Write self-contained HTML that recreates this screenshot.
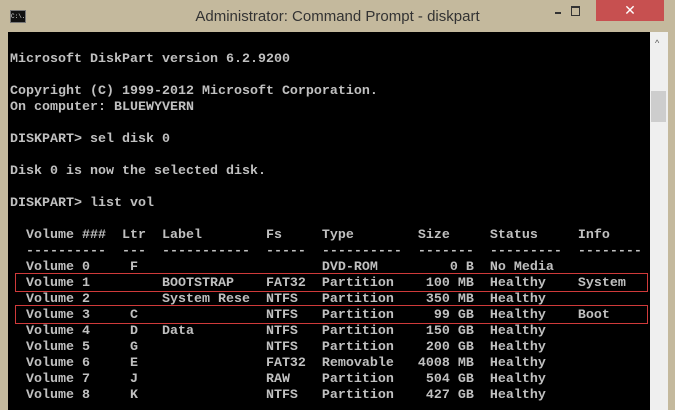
<!DOCTYPE html><html><head><style>
body{margin:0;width:675px;height:410px;overflow:hidden;background:#c4b99d;position:relative;font-family:"Liberation Sans",sans-serif}
.t{position:absolute;left:0;top:8px;width:675px;text-align:center;font-size:15px;color:#333}
.ic{position:absolute;left:10px;top:10px;width:14px;height:11px;background:#111;border:1px solid #777;color:#ddd;font-size:6px;line-height:11px;font-family:"Liberation Mono",monospace}
.cl{position:absolute;left:596px;top:0;width:68px;height:21px;background:#c75050;color:#fff;text-align:center;font-size:14px;line-height:21px}
.con{position:absolute;left:8px;top:32px;width:642px;height:378px;background:#000}
pre{margin:0;position:absolute;left:2px;top:4px;font-family:"Liberation Mono",monospace;font-weight:bold;font-size:13.33px;line-height:16px;color:#c0c0c0}
.sb{position:absolute;left:650px;top:32px;width:18px;height:378px;background:#efefef}
.th{position:absolute;left:651px;top:91px;width:15px;height:31px;background:#cdcdcd}
.box{position:absolute;left:15px;width:631px;height:17px;border:1px solid #d03a3a}
</style></head><body>
<div class="ic">C:\.</div>
<div class="t">Administrator: Command Prompt - diskpart</div>
<div style="position:absolute;left:555px;top:12px;width:6px;height:2px;background:#333"></div>
<div style="position:absolute;left:571px;top:6px;width:7px;height:7px;border:1px solid #333;border-top-width:2px"></div>
<div class="cl">✕</div>
<div class="con"><pre>

Microsoft DiskPart version 6.2.9200

Copyright (C) 1999-2012 Microsoft Corporation.
On computer: BLUEWYVERN

DISKPART> sel disk 0

Disk 0 is now the selected disk.

DISKPART> list vol

  Volume ###  Ltr  Label        Fs     Type        Size     Status     Info
  ----------  ---  -----------  -----  ----------  -------  ---------  --------
  Volume 0     F                       DVD-ROM         0 B  No Media
  Volume 1         BOOTSTRAP    FAT32  Partition    100 MB  Healthy    System
  Volume 2         System Rese  NTFS   Partition    350 MB  Healthy
  Volume 3     C                NTFS   Partition     99 GB  Healthy    Boot
  Volume 4     D   Data         NTFS   Partition    150 GB  Healthy
  Volume 5     G                NTFS   Partition    200 GB  Healthy
  Volume 6     E                FAT32  Removable   4008 MB  Healthy
  Volume 7     J                RAW    Partition    504 GB  Healthy
  Volume 8     K                NTFS   Partition    427 GB  Healthy</pre></div>
<div class="box" style="top:273px"></div>
<div class="box" style="top:305px"></div>
<div class="sb"><div style="position:absolute;left:5px;top:6px;font-size:9px;color:#555">^</div></div>
<div class="th"></div>
</body></html>
